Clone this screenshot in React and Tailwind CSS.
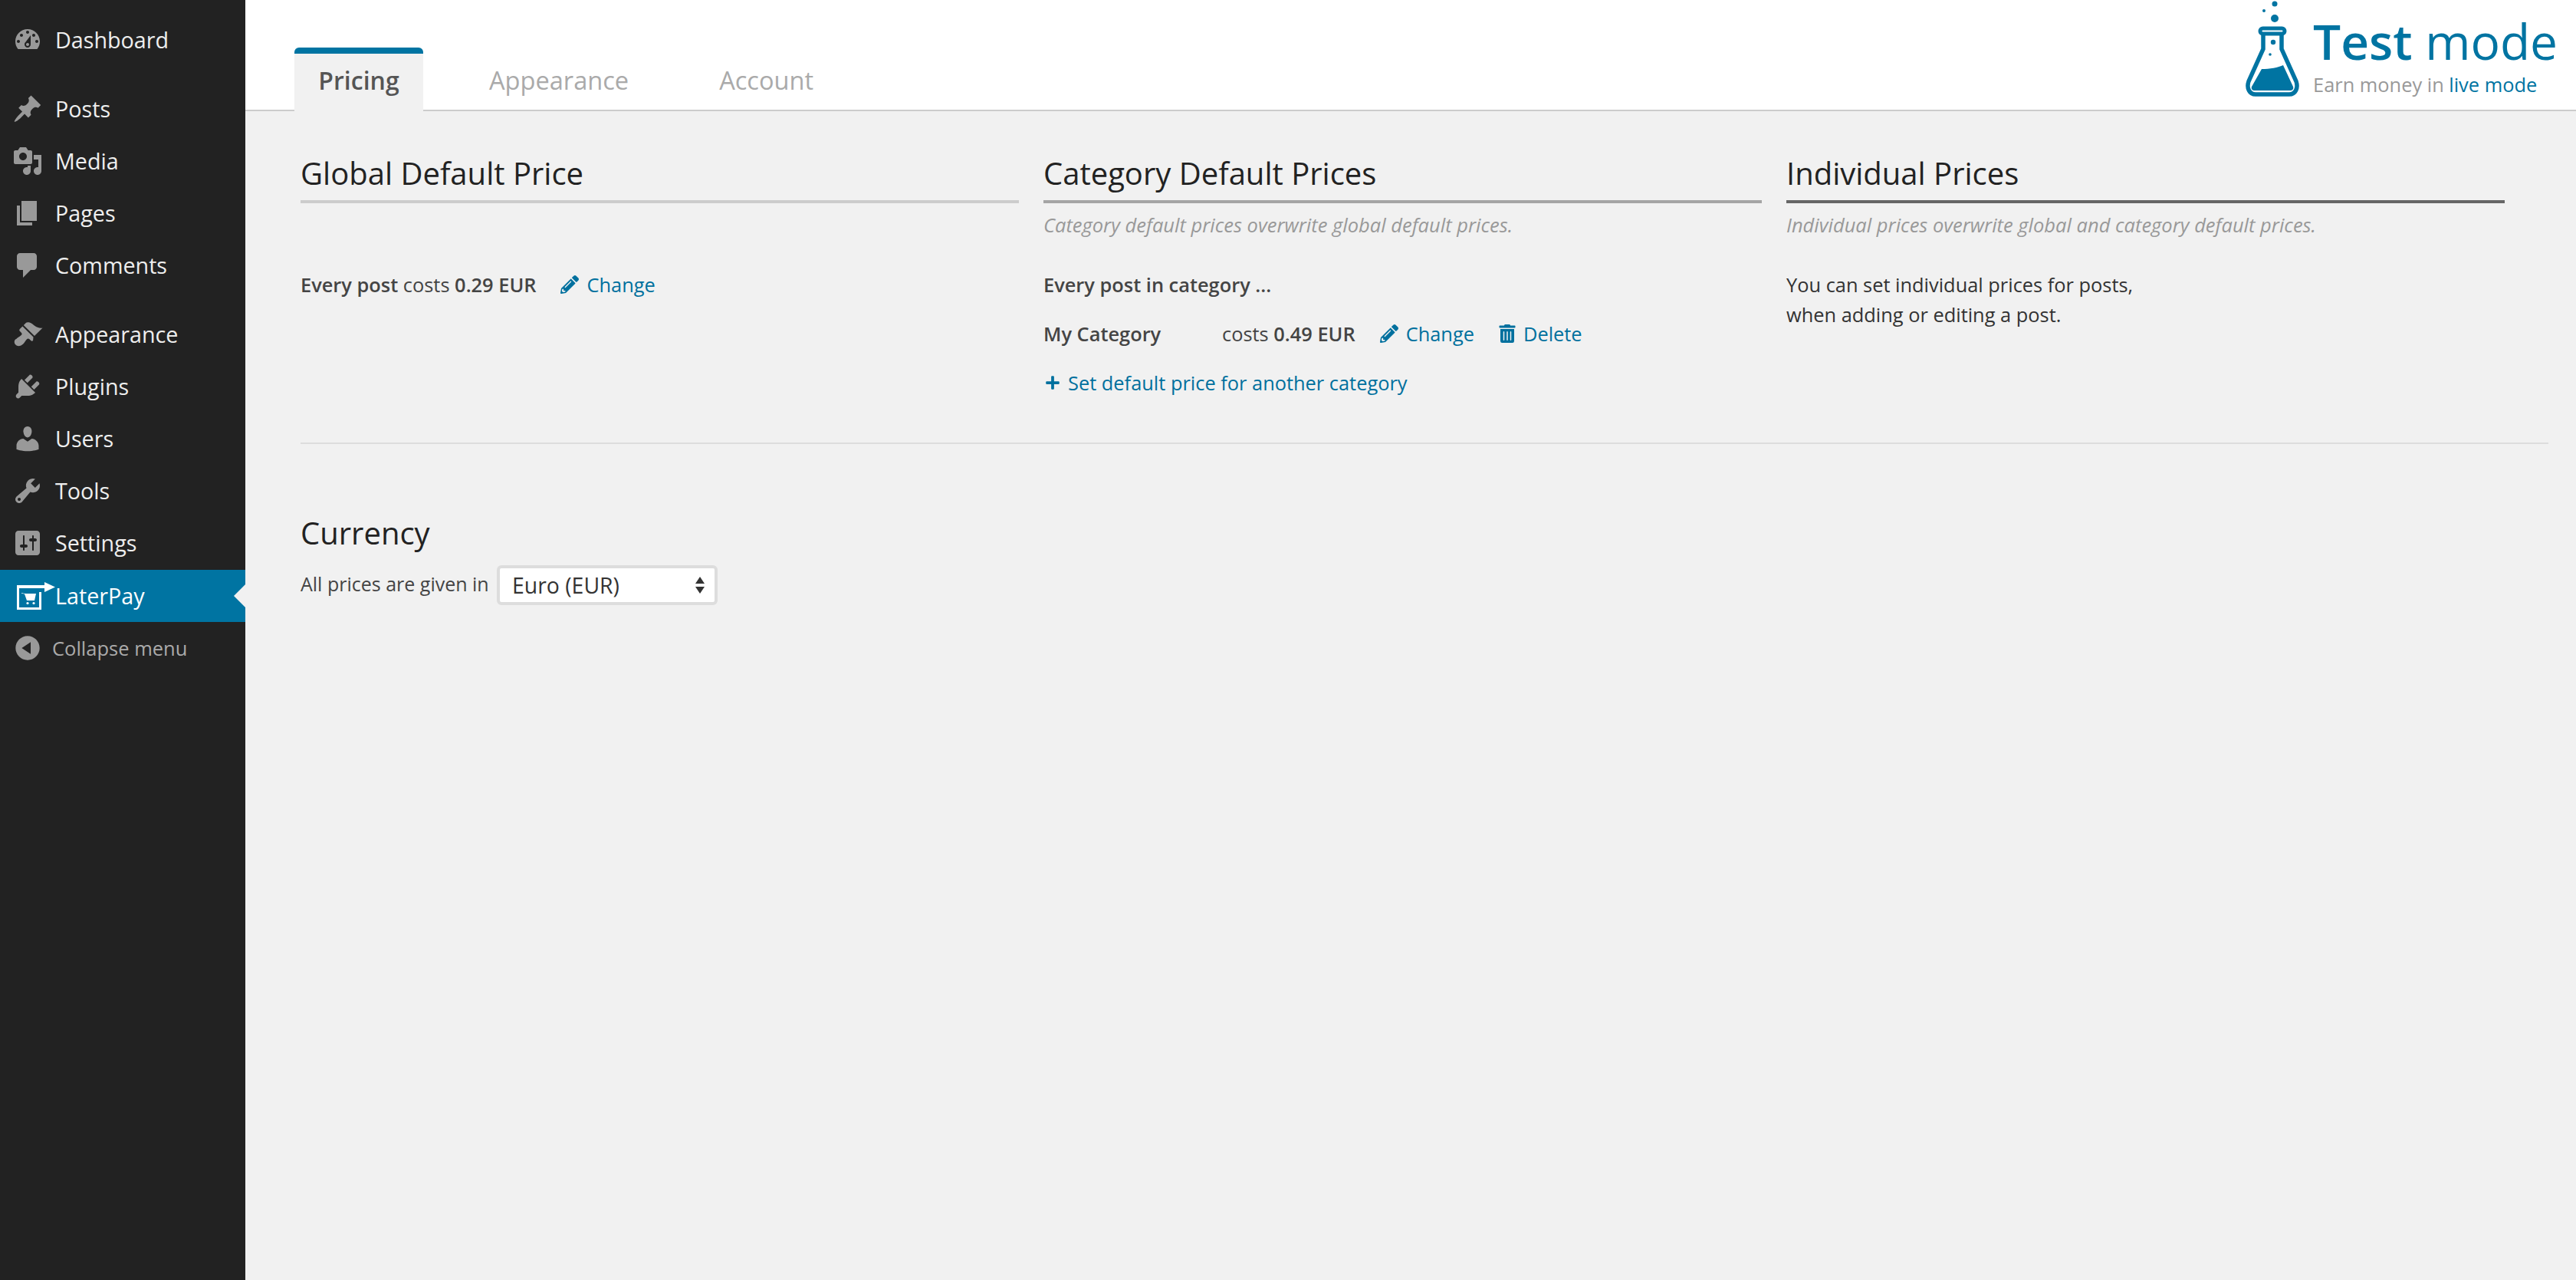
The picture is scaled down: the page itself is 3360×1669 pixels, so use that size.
import { FaPencilAlt, FaTrashAlt, FaPlus } from 'react-icons/fa';

const menuGroups = [
  [
    {
      label: 'Dashboard',
      path: 'M3.76 16h12.48c1.1-1.37 1.76-3.11 1.76-5 0-4.42-3.58-8-8-8s-8 3.58-8 8c0 1.89.66 3.63 1.76 5zM10 4c.55 0 1 .45 1 1s-.45 1-1 1-1-.45-1-1 .45-1 1-1zM6 6c.55 0 1 .45 1 1s-.45 1-1 1-1-.45-1-1 .45-1 1-1zm8 0c.55 0 1 .45 1 1s-.45 1-1 1-1-.45-1-1 .45-1 1-1zm-5.37 5.55L12 7v6c0 1.1-.9 2-2 2s-2-.9-2-2c0-.57.24-1.08.63-1.45zM4 10c.55 0 1 .45 1 1s-.45 1-1 1-1-.45-1-1 .45-1 1-1zm12 0c.55 0 1 .45 1 1s-.45 1-1 1-1-.45-1-1 .45-1 1-1zm-5 3c0-.55-.45-1-1-1s-1 .45-1 1 .45 1 1 1 1-.45 1-1z',
    },
  ],
  [
    {
      label: 'Posts',
      path: 'M10.44 3.02l1.82-1.82 6.36 6.35-1.83 1.82c-1.05-.68-2.48-.57-3.41.36l-.75.75c-.92.93-1.04 2.35-.35 3.41l-1.83 1.82-2.41-2.41-2.8 2.79c-.42.42-3.38 2.71-3.8 2.29s1.86-3.39 2.28-3.81l2.79-2.79L4.1 9.36l1.83-1.82c1.05.69 2.48.57 3.4-.36l.75-.75c.93-.92 1.05-2.35.36-3.41z',
    },
    {
      label: 'Media',
      path: 'M13 11V4c0-.55-.45-1-1-1h-1.67L9 1H5L3.67 3H2c-.55 0-1 .45-1 1v7c0 .55.45 1 1 1h10c.55 0 1-.45 1-1zM7 4.5c1.38 0 2.5 1.12 2.5 2.5S8.38 9.5 7 9.5 4.5 8.38 4.5 7 5.62 4.5 7 4.5zM14 6h5v10.5c0 1.38-1.12 2.5-2.5 2.5S14 17.88 14 16.5s1.12-2.5 2.5-2.5c.17 0 .34.02.5.05V9h-3V6zm-4 8.05V13h2v3.5c0 1.38-1.12 2.5-2.5 2.5S7 17.88 7 16.5 8.12 14 9.5 14c.17 0 .34.02.5.05z',
    },
    { label: 'Pages', path: 'M6 15V2h10v13H6zm-1 1h8v2H3V5h2v11z' },
    {
      label: 'Comments',
      path: 'M5 2h9c1.1 0 2 .9 2 2v7c0 1.1-.9 2-2 2h-2l-5 5v-5H5c-1.1 0-2-.9-2-2V4c0-1.1.9-2 2-2z',
    },
  ],
  [
    {
      label: 'Appearance',
      path: 'M14.48 11.06L7.41 3.99l1.5-1.5c.5-.56 2.3-.47 3.51.32 1.21.8 1.43 1.28 2.91 2.1 1.18.64 2.45 1.26 4.45.85zm-.71.71L6.7 4.7 4.93 6.47c-.39.39-.39 1.02 0 1.41l1.06 1.06c.39.39.39 1.03 0 1.42-.6.6-1.43 1.11-2.21 1.69-.35.26-.7.53-1.01.84C1.43 13.23.78 15.4 2.19 16.81s3.58.76 4.93-.59c.31-.31.58-.66.84-1.01.58-.78 1.09-1.61 1.69-2.21.39-.39 1.03-.39 1.42 0l1.06 1.06c.39.39 1.02.39 1.41 0z',
    },
    {
      label: 'Plugins',
      path: 'M13.11 4.36L9.87 7.6 8 5.73l3.24-3.24c.35-.34 1.05-.2 1.56.32.52.51.66 1.21.31 1.55zm-8 1.77l.91-1.12 9.01 9.01-1.19.84c-.71.71-2.63 1.16-3.82 1.16H6.14L4.9 17.26c-.59.59-1.54.59-2.12 0-.59-.58-.59-1.53 0-2.12l1.24-1.24v-3.88c0-1.13.4-3.19 1.09-3.89zm7.26 3.97l3.24-3.24c.34-.35 1.04-.21 1.55.31.52.51.66 1.21.31 1.55l-3.24 3.25z',
    },
    {
      label: 'Users',
      path: 'M10 9.25c-2.27 0-2.73-3.44-2.73-3.44C7 4.02 7.82 2 9.97 2c2.16 0 2.98 2.02 2.71 3.81 0 0-.41 3.44-2.68 3.44zm0 2.57L12.72 10c2.39 0 4.52 2.33 4.52 4.53v2.49s-3.65 1.13-7.24 1.13c-3.65 0-7.24-1.13-7.24-1.13v-2.49c0-2.25 1.94-4.48 4.47-4.48z',
    },
    {
      label: 'Tools',
      path: 'M16.68 9.77c-1.34 1.34-3.3 1.67-4.95.99l-5.41 6.52c-.99.99-2.59.99-3.58 0s-.99-2.59 0-3.57l6.52-5.42c-.68-1.65-.35-3.61.99-4.95 1.28-1.28 3.12-1.62 4.72-1.06l-2.89 2.89 2.82 2.82 2.86-2.87c.53 1.58.18 3.39-1.08 4.65zM3.81 16.21c.4.39 1.04.39 1.43 0 .4-.4.4-1.04 0-1.43-.39-.4-1.03-.4-1.43 0-.39.39-.39 1.03 0 1.43z',
    },
    {
      label: 'Settings',
      path: 'M18 16V4c0-1.1-.9-2-2-2H4c-1.1 0-2 .9-2 2v12c0 1.1.9 2 2 2h12c1.1 0 2-.9 2-2zM8 11h1c.55 0 1 .45 1 1s-.45 1-1 1H8v1.5c0 .28-.22.5-.5.5s-.5-.22-.5-.5V13H6c-.55 0-1-.45-1-1s.45-1 1-1h1V5.5c0-.28.22-.5.5-.5s.5.22.5.5V11zm5-2h-1c-.55 0-1-.45-1-1s.45-1 1-1h1V5.5c0-.28.22-.5.5-.5s.5.22.5.5V7h1c.55 0 1 .45 1 1s-.45 1-1 1h-1v5.5c0 .28-.22.5-.5.5s-.5-.22-.5-.5V9z',
    },
  ],
];

const MenuIcon = ({ path }) => (
  <svg viewBox="0 0 20 20" className="w-10 h-10 shrink-0 fill-[#999]">
    <path d={path} />
  </svg>
);

const LaterPayIcon = () => (
  <svg viewBox="0 0 50 36" className="w-[50px] h-[36px] shrink-0">
    <path d="M0 4h36V0l14 6.5L36 13V8H3v25h26V13h3v23H0z" fill="#fff" />
    <path d="M6 14l3 .8 3 .2h13l-2 9H13l-3-8.5-4-.8z" fill="#fff" />
    <circle cx="14" cy="27.5" r="1.6" fill="#fff" />
    <circle cx="22" cy="27.5" r="1.6" fill="#fff" />
  </svg>
);

const FlaskLogo = () => (
  <svg viewBox="0 0 72 129" className="w-[72px] h-[129px] shrink-0">
    <circle cx="39" cy="5" r="3.5" fill="#0074a2" />
    <circle cx="25" cy="14" r="2" fill="#0074a2" />
    <circle cx="39" cy="24" r="5" fill="#0074a2" />
    <path
      d="M24 44v20L5 106c-3 9 1 17 9 17h44c8 0 12-8 9-17L48 64V44"
      fill="none"
      stroke="#0074a2"
      strokeWidth="5.5"
    />
    <rect x="20" y="37" width="32" height="7" rx="3.5" fill="none" stroke="#0074a2" strokeWidth="5" />
    <circle cx="37" cy="55" r="3.2" fill="#0074a2" />
    <circle cx="33" cy="71" r="1.8" fill="#0074a2" />
    <path d="M22 90c10 0 22-2 28-5l13 28c1 3-1 5-4 5H13c-3 0-5-2-4-5z" fill="#0074a2" />
  </svg>
);

const Sidebar = () => (
  <aside className="w-[320px] shrink-0 bg-[#222] pt-[18px] text-[28.7px] text-[#eee]">
    {menuGroups.map((group, i) => (
      <div key={i} className="mb-[22px]">
        {group.map((item) => (
          <div key={item.label} className="h-[68px] pl-4 flex items-center">
            <MenuIcon path={item.path} />
            <span className="ml-[16px]">{item.label}</span>
          </div>
        ))}
      </div>
    ))}
    <div className="relative -mt-[21px] h-[68px] bg-[#0074a2] pl-[22px] flex items-center text-white">
      <LaterPayIcon />
      <span>LaterPay</span>
      <div className="absolute right-0 top-[19px] w-0 h-0 border-y-[15px] border-y-transparent border-r-[15px] border-r-[#f1f1f1]" />
    </div>
    <div className="h-[68px] pl-4 flex items-center text-[25.5px] text-[#aaa]">
      <svg viewBox="0 0 20 20" className="w-10 h-10 shrink-0 fill-[#999]">
        <path d="M10 2.16c4.33 0 7.84 3.51 7.84 7.84s-3.51 7.84-7.84 7.84S2.16 14.33 2.16 10 5.71 2.16 10 2.16zm2 11.72V6.12L6.18 9.97z" />
      </svg>
      <span className="ml-3">Collapse menu</span>
    </div>
  </aside>
);

const Header = () => (
  <header className="h-[145px] bg-white border-b-2 border-[#ccc] flex justify-between pl-[64px] pr-[24px]">
    <nav className="flex items-end text-[32.6px] text-[#aaa]">
      <div className="w-[168px] h-[83px] -mb-[2px] rounded-t-md border-t-8 border-[#0074a2] bg-[#f1f1f1] text-[#555] font-semibold text-[32px] flex items-center justify-center pb-[6px]">
        Pricing
      </div>
      <div className="ml-[86px] h-[83px] pt-[12px] flex items-center pb-[4px]">Appearance</div>
      <div className="ml-[118px] h-[83px] pt-[12px] flex items-center pb-[4px]">Account</div>
    </nav>
    <div className="flex">
      <FlaskLogo />
      <div className="ml-[17px] pt-[14px]">
        <div className="text-[64px] leading-[80px] text-[#0074a2]">
          <span className="font-semibold">Test</span> mode
        </div>
        <div className="text-[25.4px] leading-[32px] text-[#999]">
          Earn money in <span className="text-[#0074a2]">live mode</span>
        </div>
      </div>
    </div>
  </header>
);

const Heading = ({ children, rule }) => (
  <h2 className={`h-[71px] leading-[64px] text-[40px] text-[#222] border-b-4 ${rule}`}>{children}</h2>
);

const Note = ({ children }) => (
  <p className="h-[40px] mt-2 leading-[40px] italic text-[25.5px] text-[#999]">{children}</p>
);

const Row = ({ children }) => <div className="h-[64px] flex items-center">{children}</div>;

const LinkLabel = ({ icon, children, className = '' }) => (
  <span className={`inline-flex items-center gap-[10px] text-[#00709e] ${className}`}>
    {icon}
    {children}
  </span>
);

const App = () => (
  <div className="w-[3360px] h-[1669px] flex overflow-hidden font-['Open_Sans',sans-serif] bg-[#f1f1f1]">
    <Sidebar />
    <div className="flex-1">
      <Header />
      <main className="pl-[72px] pr-[36px] pt-[49px] text-[25.4px] text-[#444]">
        <div className="grid grid-cols-3 gap-x-[32px] pb-[46px] pr-[57px] h-[383px]">
          <section>
            <Heading rule="border-[#ccc]">Global Default Price</Heading>
            <div className="mt-[74px]">
              <Row>
                <b className="font-semibold">Every post</b>&nbsp;costs&nbsp;<b className="font-semibold">0.29 EUR</b>
                <LinkLabel icon={<FaPencilAlt className="w-6 h-6" />} className="ml-8">Change</LinkLabel>
              </Row>
            </div>
          </section>
          <section>
            <Heading rule="border-[#a5a5a5]">Category Default Prices</Heading>
            <Note>Category default prices overwrite global default prices.</Note>
            <div className="mt-[26px]">
              <Row><b className="font-semibold">Every post in category ...</b></Row>
              <Row>
                <b className="font-semibold w-[233px]">My Category</b>
                costs&nbsp;<b className="font-semibold">0.49 EUR</b>
                <LinkLabel icon={<FaPencilAlt className="w-6 h-6" />} className="ml-8">Change</LinkLabel>
                <LinkLabel icon={<FaTrashAlt className="w-[22px] h-6" />} className="ml-8">Delete</LinkLabel>
              </Row>
              <Row>
                <LinkLabel icon={<FaPlus className="w-5 h-5" />} className="ml-[2px]">Set default price for another category</LinkLabel>
              </Row>
            </div>
          </section>
          <section>
            <Heading rule="border-[#666]">Individual Prices</Heading>
            <Note>Individual prices overwrite global and category default prices.</Note>
            <p className="mt-[39px] leading-[39px] text-[#333]">
              You can set individual prices for posts,<br />when adding or editing a post.
            </p>
          </section>
        </div>
        <div className="border-t-2 border-[#ddd] pt-[86px]">
          <h2 className="text-[40px] leading-[60px] text-[#222]">Currency</h2>
          <div className="mt-[12px] flex items-center">
            <span className="w-[244px] whitespace-nowrap text-[25px] -mt-[3px]">All prices are given in</span>
            <div className="ml-[12px] w-[288px] h-[52px] rounded-md border-4 border-[#ddd] bg-white pl-4 pr-3 flex items-center justify-between text-[#333] text-[28.4px]">
              Euro (EUR)
              <svg viewBox="0 0 14 24" className="w-[14px] h-6 fill-[#333]">
                <path d="M7 1l6 9H1zM7 23l-6-9h12z" />
              </svg>
            </div>
          </div>
        </div>
      </main>
    </div>
  </div>
);

export default App;
